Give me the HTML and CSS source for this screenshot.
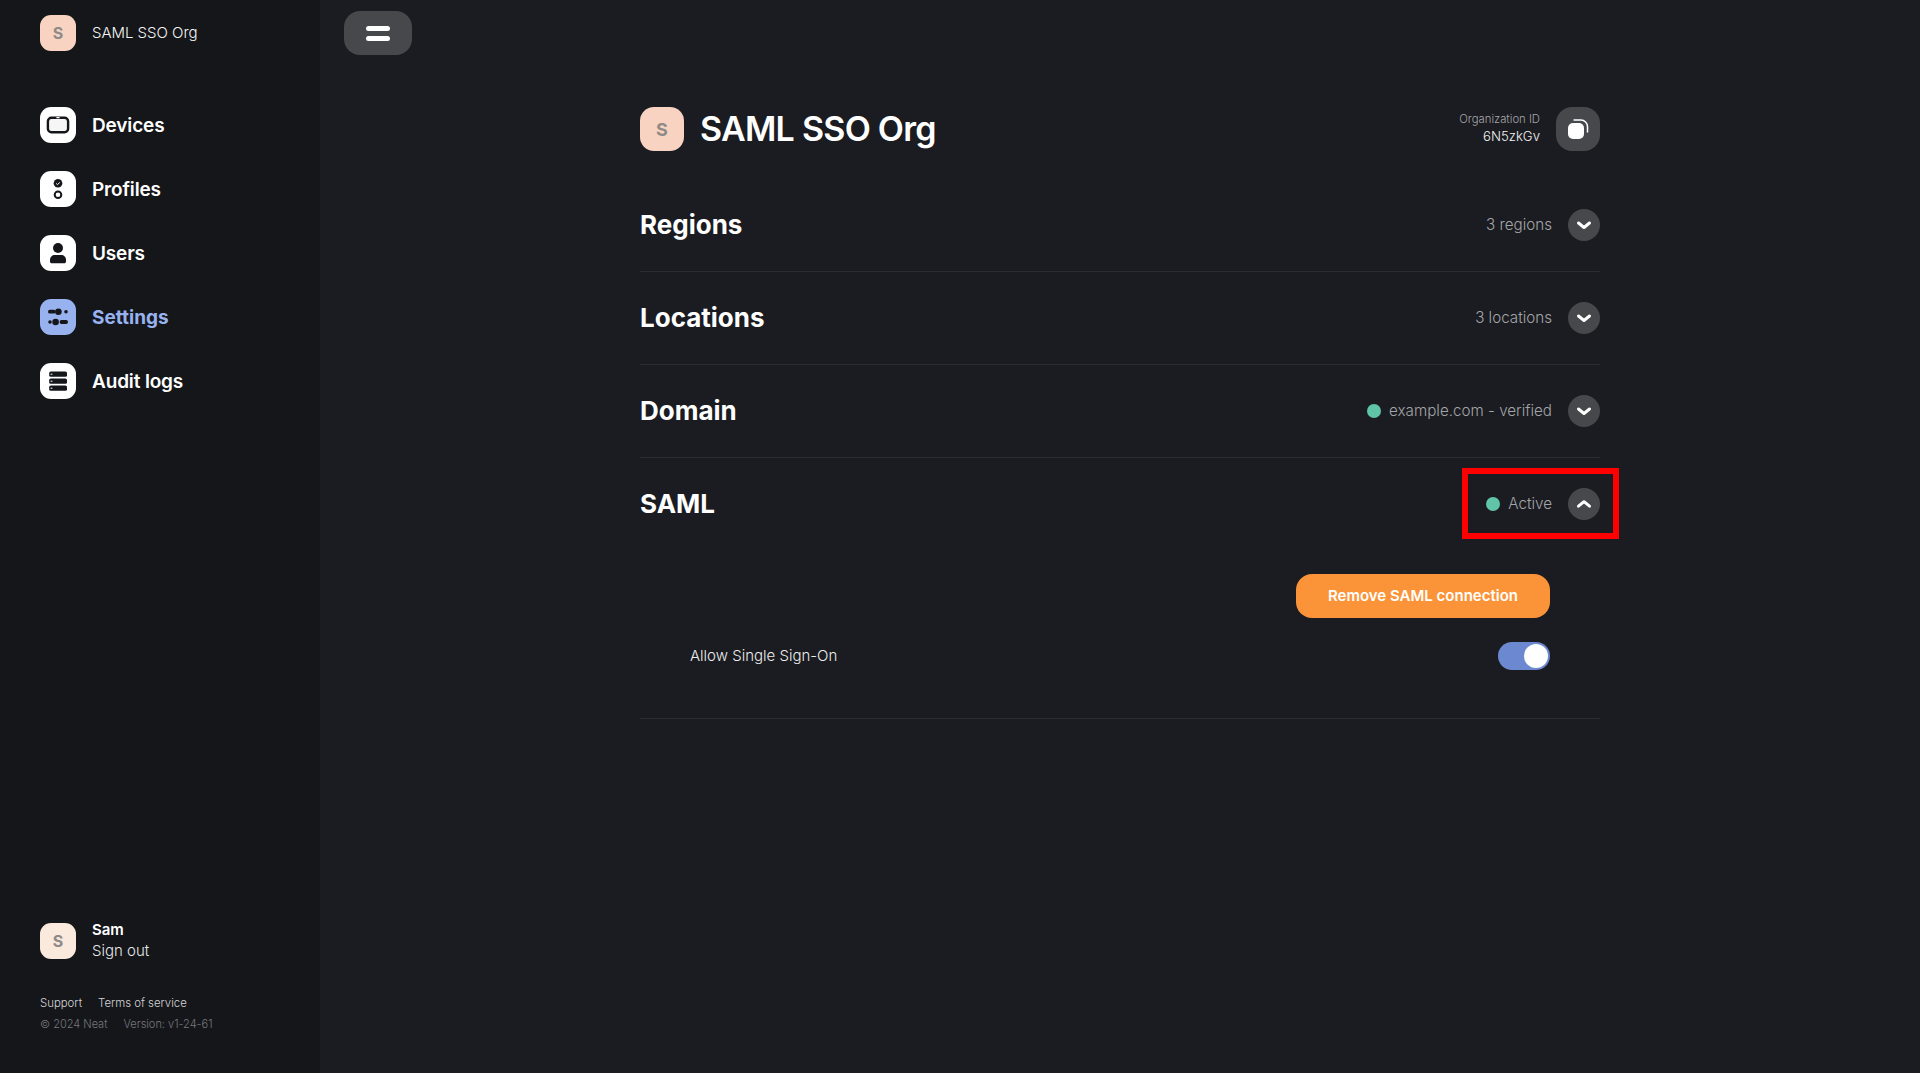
FILE: index.html
```html
<!DOCTYPE html>
<html lang="en">
<head>
<meta charset="utf-8">
<title>SAML SSO Org</title>
<link rel="stylesheet" href="styles.css">
</head>
<body>
<div class="app">
  <aside class="sidebar">
    <div class="org">
      <span class="tile tile-peach"><span class="tile-letter">S</span></span>
      <span class="org-name">SAML SSO Org</span>
    </div>
    <nav class="nav">
      <a class="nav-item">
        <span class="tile tile-white">
          <svg class="nav-icon" viewBox="0 0 24 24"><rect x="1.9" y="4.7" width="20.2" height="14.6" rx="3.5" fill="#f6f6f6" stroke="#15161a" stroke-width="2.4"/><rect x="10.3" y="4.1" width="3.4" height="1.1" rx=".5" fill="#fff"/></svg>
        </span>
        <span>Devices</span>
      </a>
      <a class="nav-item">
        <span class="tile tile-white">
          <svg class="nav-icon" viewBox="0 0 24 24"><circle cx="12" cy="6.3" r="4.3" fill="#15161a"/><path d="M10.2 6.5l1.3 1.1 2.3-2.2" fill="none" stroke="#fff" stroke-width="1"/><circle cx="12" cy="17.7" r="3.3" fill="none" stroke="#15161a" stroke-width="2"/></svg>
        </span>
        <span>Profiles</span>
      </a>
      <a class="nav-item">
        <span class="tile tile-white">
          <svg class="nav-icon" viewBox="0 0 24 24"><circle cx="12" cy="7" r="5" fill="#15161a"/><path d="M4 19c0-3 2-5 5-5h6c3 0 5 2 5 5v1.5c0 1-.8 1.8-1.8 1.8H5.8c-1 0-1.8-.8-1.8-1.8z" fill="#15161a"/></svg>
        </span>
        <span>Users</span>
      </a>
      <a class="nav-item nav-active">
        <span class="tile tile-blue">
          <svg class="nav-icon" viewBox="0 0 24 24"><rect x="2" y="4.8" width="7.6" height="3.8" rx="1.9" fill="#15161a"/><circle cx="12.4" cy="6.7" r="3.3" fill="#15161a"/><circle cx="20" cy="6.7" r="1.8" fill="#15161a"/><circle cx="4" cy="17" r="1.8" fill="#15161a"/><circle cx="9.6" cy="17" r="3.3" fill="#15161a"/><rect x="13.6" y="15.1" width="8.4" height="3.8" rx="1.9" fill="#15161a"/></svg>
        </span>
        <span>Settings</span>
      </a>
      <a class="nav-item">
        <span class="tile tile-white">
          <svg class="nav-icon" viewBox="0 0 24 24"><rect x="3.2" y="2.6" width="17.8" height="5.2" rx="1.6" fill="#15161a"/><rect x="3.2" y="9.6" width="17.8" height="5.2" rx="1.6" fill="#15161a"/><rect x="3.2" y="16.6" width="17.8" height="5.2" rx="1.6" fill="#15161a"/><rect x="4.6" y="4.7" width="1.8" height="1" fill="#fff"/><rect x="4.6" y="11.7" width="1.8" height="1" fill="#fff"/><rect x="4.6" y="18.7" width="1.8" height="1" fill="#fff"/></svg>
        </span>
        <span>Audit logs</span>
      </a>
    </nav>
    <div class="side-bottom">
      <div class="user">
        <span class="tile tile-cream"><span class="tile-letter">S</span></span>
        <div class="user-text">
          <div class="user-name">Sam</div>
          <div class="user-out">Sign out</div>
        </div>
      </div>
      <div class="links"><span>Support</span><span>Terms of service</span></div>
      <div class="meta"><span>© 2024 Neat</span><span>Version: v1-24-61</span></div>
    </div>
  </aside>
  <main class="main">
    <div class="topbar">
      <button class="menu-btn" type="button" aria-label="Menu"><span class="menu-line"></span><span class="menu-line"></span></button>
    </div>
    <div class="content">
      <header class="page-head">
        <span class="tile-lg"><span class="tile-lg-letter">S</span></span>
        <h1 class="page-title">SAML SSO Org</h1>
        <div class="org-id">
          <div class="org-id-label">Organization ID</div>
          <div class="org-id-value">6N5zkGv</div>
        </div>
        <button class="copy-btn" type="button" aria-label="Copy">
          <svg width="24" height="24" viewBox="0 0 24 24"><rect x="2" y="6" width="16" height="16" rx="5" fill="#fff"/><path d="M7.5 3h7.5c3.5 0 6.5 3 6.5 6.5v6" fill="none" stroke="#fff" stroke-width="1.5"/></svg>
        </button>
      </header>

      <section class="section">
        <div class="row">
          <h2 class="row-title">Regions</h2>
          <div class="row-right">
            <span class="row-status">3 regions</span>
            <span class="chev"><svg width="16" height="16" viewBox="0 0 16 16"><path d="M2.5 6L8 10.5 13.5 6" fill="none" stroke="#fff" stroke-width="3" stroke-linecap="round" stroke-linejoin="round"/></svg></span>
          </div>
        </div>
      </section>
      <section class="section">
        <div class="row">
          <h2 class="row-title">Locations</h2>
          <div class="row-right">
            <span class="row-status">3 locations</span>
            <span class="chev"><svg width="16" height="16" viewBox="0 0 16 16"><path d="M2.5 6L8 10.5 13.5 6" fill="none" stroke="#fff" stroke-width="3" stroke-linecap="round" stroke-linejoin="round"/></svg></span>
          </div>
        </div>
      </section>
      <section class="section">
        <div class="row">
          <h2 class="row-title">Domain</h2>
          <div class="row-right">
            <span class="dot"></span>
            <span class="row-status">example.com - verified</span>
            <span class="chev"><svg width="16" height="16" viewBox="0 0 16 16"><path d="M2.5 6L8 10.5 13.5 6" fill="none" stroke="#fff" stroke-width="3" stroke-linecap="round" stroke-linejoin="round"/></svg></span>
          </div>
        </div>
      </section>
      <section class="section">
        <div class="row">
          <h2 class="row-title">SAML</h2>
          <div class="row-right row-marked">
            <span class="dot"></span>
            <span class="row-status">Active</span>
            <span class="chev"><svg width="16" height="16" viewBox="0 0 16 16"><path d="M2.5 10.2L8 5.7 13.5 10.2" fill="none" stroke="#fff" stroke-width="3" stroke-linecap="round" stroke-linejoin="round"/></svg></span>
            <span class="highlight"></span>
          </div>
        </div>
        <div class="panel">
          <div class="panel-actions"><button class="danger-btn" type="button">Remove SAML connection</button></div>
          <div class="setting">
            <span class="setting-label">Allow Single Sign-On</span>
            <span class="toggle"><span class="knob"></span></span>
          </div>
        </div>
      </section>
    </div>
  </main>
</div>
</body>
</html>
```

FILE: styles.css
```css
* { box-sizing: border-box; }
html, body { margin: 0; height: 100%; }
body {
  background: #1b1c21;
  color: #fff;
  font-family: Inter, "Liberation Sans", sans-serif;
  overflow: hidden;
}
.app { display: flex; height: 1073px; }

.sidebar {
  width: 320px;
  flex: none;
  background: #15161a;
  padding: 15px 0 41px 40px;
  display: flex;
  flex-direction: column;
}
.org { display: flex; align-items: center; gap: 16px; }
.org-name { font-size: 15px; font-weight: 300; color: #f4f4f5; padding-bottom: 2px; letter-spacing: -0.03px; }

.tile {
  width: 36px;
  height: 36px;
  border-radius: 11px;
  display: flex;
  align-items: center;
  justify-content: center;
  flex: none;
}
.tile-peach { background: #f9d3c1; }
.tile-cream { background: #fae9dd; }
.tile-white { background: #fff; }
.tile-blue { background: #98b2f0; }
.tile-letter { font-size: 16px; font-weight: 700; color: #8f8a88; }

.nav { display: flex; flex-direction: column; gap: 28px; margin-top: 56px; }
.nav-item { display: flex; align-items: center; gap: 16px; font-size: 19px; font-weight: 600; letter-spacing: -0.15px; color: #fff; }
.nav-active { color: #98b2f0; font-weight: 700; letter-spacing: 0; }
.nav-icon { width: 24px; height: 24px; display: block; }

.side-bottom { margin-top: auto; }
.user { display: flex; align-items: center; gap: 16px; }
.user-text { display: flex; flex-direction: column; gap: 2px; }
.user-name { font-size: 15px; font-weight: 600; line-height: 19px; }
.user-out { font-size: 15px; font-weight: 300; line-height: 20px; color: #e6e6e8; }
.links { display: flex; gap: 16px; margin-top: 34px; font-size: 11.4px; line-height: 16px; font-weight: 300; color: #d4d4d6; }
.meta { display: flex; gap: 16px; margin-top: 5px; font-size: 11px; line-height: 16px; font-weight: 300; color: #77787c; }

.main { flex: 1; display: flex; flex-direction: column; padding: 11px 24px; }
.menu-btn {
  width: 68px;
  height: 44px;
  border: 0;
  border-radius: 16px;
  background: #47484c;
  display: flex;
  flex-direction: column;
  align-items: center;
  justify-content: center;
  gap: 5px;
  padding: 0;
}
.menu-line { width: 24px; height: 5px; border-radius: 2.5px; background: #fff; }

.content { width: 960px; margin: 52px 0 0 296px; }
.page-head { display: flex; align-items: center; height: 44px; }
.tile-lg {
  width: 44px;
  height: 44px;
  border-radius: 14px;
  background: #f9d3c1;
  display: flex;
  align-items: center;
  justify-content: center;
  flex: none;
}
.tile-lg-letter { font-size: 18px; font-weight: 700; color: #8f8a88; }
.page-title { margin: 0 0 0 16px; font-size: 34px; font-weight: 600; line-height: 44px; letter-spacing: -0.75px; flex: 1; }
.org-id { text-align: right; margin-right: 16px; padding-bottom: 1px; }
.org-id-label { font-size: 11.3px; font-weight: 300; line-height: 16px; color: #a4a5a8; }
.org-id-value { font-size: 13.2px; font-weight: 300; line-height: 19px; color: #f2f2f3; }
.copy-btn {
  width: 44px;
  height: 44px;
  border: 0;
  border-radius: 16px;
  background: #47484c;
  display: flex;
  align-items: center;
  justify-content: center;
  padding: 0;
}

.section { border-bottom: 1px solid #2b2c31; }
.section:first-of-type { margin-top: 28px; }
.row { display: flex; align-items: center; justify-content: space-between; height: 92px; }
.row-title { margin: 0; font-size: 26px; font-weight: 700; line-height: 34px; }
.row-right { display: flex; align-items: center; position: relative; }
.row-status { font-size: 15.2px; font-weight: 300; color: #a4a5a8; padding-bottom: 2px; }
.dot { width: 14px; height: 14px; border-radius: 50%; background: #5fc4a8; margin-right: 8px; }
.chev {
  width: 32px;
  height: 32px;
  border-radius: 50%;
  background: #47484c;
  display: flex;
  align-items: center;
  justify-content: center;
  margin-left: 16px;
}
.highlight {
  position: absolute;
  left: -24px;
  right: -19px;
  top: -20px;
  bottom: -19px;
  border: 6px solid #f00;
}

.panel { padding: 24px 50px 0 50px; }
.panel-actions { display: flex; justify-content: flex-end; }
.danger-btn {
  width: 254px;
  height: 44px;
  border: 0;
  border-radius: 16px;
  background: #fb9438;
  color: #fff;
  font: 600 15px Inter, "Liberation Sans", sans-serif;
  padding: 0 0 2px;
}
.setting { display: flex; align-items: center; justify-content: space-between; margin-top: 24px; margin-bottom: 48px; }
.setting-label { font-size: 15px; font-weight: 300; color: #ececed; padding-bottom: 2px; }
.toggle {
  width: 52px;
  height: 28px;
  border-radius: 14px;
  background: #6c88d1;
  display: flex;
  align-items: center;
  justify-content: flex-end;
  padding: 0 2px;
}
.knob { width: 24px; height: 24px; border-radius: 50%; background: #fff; }
```
